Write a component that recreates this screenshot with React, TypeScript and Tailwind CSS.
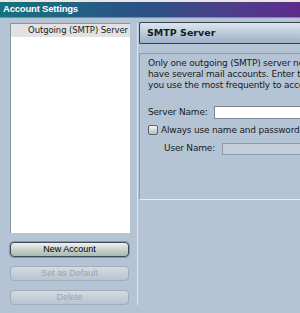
const ui = { fontFamily: '"DejaVu Sans", Verdana, sans-serif' };
const arial = { fontFamily: '"Liberation Sans", Arial, sans-serif' };

function Button({ label, disabled }: { label: string; disabled?: boolean }) {
  return (
    <button
      type="button"
      disabled={disabled}
      style={arial}
      className={`h-[15px] w-[119px] rounded-[4px] border text-[9px] leading-none ${
        disabled
          ? "border-[#9eacbb] bg-gradient-to-b from-[#d4dbe2] to-[#b9c4cf] text-[#9aa4ae]"
          : "border-[#3e4c5a] bg-gradient-to-b from-[#eef2ef] via-[#c9d4cf] to-[#a9b9b2] text-black shadow-[0_0_0_1px_#8496a8]"
      }`}
    >
      {label}
    </button>
  );
}

export default function App() {
  return (
    <div style={ui} className="h-[313px] w-[300px] overflow-hidden bg-[#b5c4d5]">
      <div className="h-[2px] bg-[#ebe7dc]" />
      <div
        style={arial}
        className="flex h-[15px] items-center bg-gradient-to-r from-[#13727f] via-[#2b4f86] to-[#5e2a8c] pl-[3px] text-[9.5px] font-bold tracking-[-0.2px] text-white"
      >
        Account Settings
      </div>
      <div className="h-[1px] bg-[#7d8b99]" />

      <div className="flex pt-[5px]">
        {/* accounts column */}
        <div className="flex w-[137px] shrink-0 flex-col pl-[10px]">
          <div className="h-[210px] w-[120px] border-t border-l border-[#8796a6] border-r-[#e4eaf0] border-b-[#e4eaf0] bg-white">
            <div className="flex h-[13px] items-center justify-end bg-[#e2e2e2] pr-[2px] text-[8.5px] tracking-[-0.1px] text-[#1c1c1c]">
              Outgoing (SMTP) Server
            </div>
          </div>
          <div className="mt-[9px] flex flex-col gap-[9px]">
            <Button label="New Account" />
            <Button label="Set as Default" disabled />
            <Button label="Delete" disabled />
          </div>
        </div>

        {/* server panel */}
        <div className="min-w-0 flex-1 border-l border-[#dbe3ec] pl-[1px]">
          <div className="-mt-[1px] flex h-[22px] w-[200px] items-center rounded-l-[2px] border border-r-0 border-[#364452] bg-gradient-to-b from-[#dde6ef] to-[#9cb0c6] pl-[7px] text-[9.5px] font-bold text-[#161c26]">
            SMTP Server
          </div>
          <div className="mt-[9px] h-[147px] w-[200px] border-t border-l border-b border-[#8e9cac] border-b-[#e8eef4] pl-[8px] pt-[4px] text-[9px] tracking-[-0.2px] text-[#1a1a1a]">
            <p className="whitespace-nowrap leading-[11px]">
              Only one outgoing (SMTP) server needs to be set up, even if you
              <br />
              have several mail accounts. Enter the name of the server that
              <br />
              you use the most frequently to access the Internet.
            </p>
            <div className="mt-[15px] flex items-center">
              <span className="w-[66px]">Server Name:</span>
              <div className="h-[13px] flex-1 border border-[#7b8794] bg-white" />
            </div>
            <div className="mt-[4px] flex items-center gap-[3px]">
              <span className="h-[10px] w-[10px] shrink-0 rounded-[2px] border border-[#56616d] bg-gradient-to-b from-[#f4f4f4] to-[#bcbcbc]" />
              <span className="whitespace-nowrap">Always use name and password</span>
            </div>
            <div className="mt-[5px] flex items-center pl-[16px]">
              <span className="w-[58px]">User Name:</span>
              <div className="h-[12px] flex-1 border border-[#8e9aa8] bg-[#c4cfdb]" />
            </div>
          </div>
        </div>
      </div>
    </div>
  );
}
